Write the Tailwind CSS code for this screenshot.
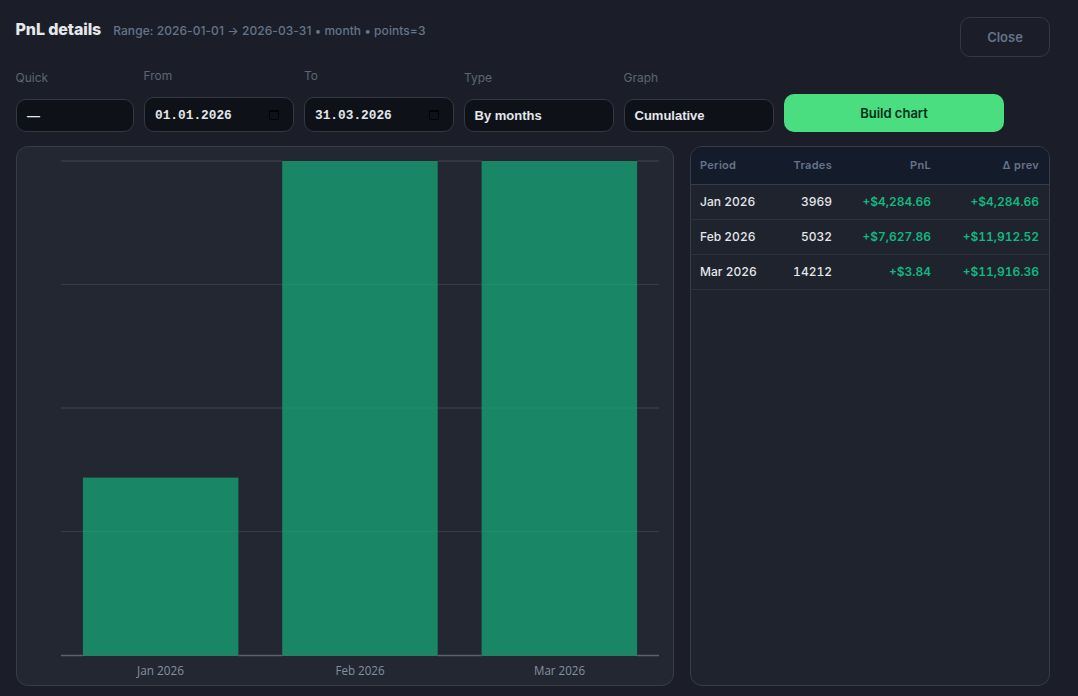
<!DOCTYPE html>
<html lang="en">
  <head>
    <meta charset="UTF-8" />
    <meta name="viewport" content="width=device-width, initial-scale=1.0" />
    <title>PnL details</title>
    <script src="https://cdn.jsdelivr.net/npm/@tailwindcss/browser@4"></script>
  </head>

  <body class="h-screen overflow-hidden bg-[#1b1e28] font-['Inter',sans-serif] text-[#e5e7eb]">
    <div class="flex h-full flex-col pt-[17px] pr-7 pb-2.5 pl-4">
      <header class="flex h-10 items-start justify-between">
        <div class="-ml-[0.5px] flex items-baseline gap-3">
          <h1 class="text-base leading-6 font-extrabold tracking-[-0.1px]">PnL details</h1>
          <span class="text-xs font-medium tracking-[0.06px] text-[#64748b]">Range: 2026-01-01 → 2026-03-31 • month • points=3</span>
        </div>
        <button class="h-10 w-[90px] rounded-[10px] border border-[#343843] pt-0.5 text-[13px] font-semibold text-[#64748b]">Close</button>
      </header>

      <div class="mt-[9px] flex h-[66px] items-end gap-2.5">
        <label class="w-[118px]">
          <span class="-ml-[0.5px] block text-xs leading-[15px] text-[#5c6675]">Quick</span>
          <span class="mt-3.5 flex h-[33px] items-center rounded-[10px] border border-[#343843] bg-[#0e1118] px-2.5 font-['Liberation_Sans',sans-serif] text-[13px] font-bold">—</span>
        </label>
        <label class="w-[150px]">
          <span class="-ml-[0.5px] block text-xs leading-[15px] text-[#5c6675]">From</span>
          <span class="mt-3.5 flex h-[35px] items-center justify-between rounded-[10px] border border-[#343843] bg-[#0e1118] pr-3 pl-2.5 font-['Liberation_Mono',monospace] text-[12.8px] font-bold">
            <span class="pt-0.5">01.01.2026</span>
            <svg class="h-3.5 w-3.5" viewBox="0 0 14 14" fill="none" stroke="#030406"><rect x="2.5" y="2.5" width="9" height="9" rx="1" /><path d="M2 3h10" stroke-width="2" /></svg>
          </span>
        </label>
        <label class="w-[150px]">
          <span class="block text-xs leading-[15px] text-[#5c6675]">To</span>
          <span class="mt-3.5 flex h-[35px] items-center justify-between rounded-[10px] border border-[#343843] bg-[#0e1118] pr-3 pl-2.5 font-['Liberation_Mono',monospace] text-[12.8px] font-bold">
            <span class="pt-0.5">31.03.2026</span>
            <svg class="h-3.5 w-3.5" viewBox="0 0 14 14" fill="none" stroke="#030406"><rect x="2.5" y="2.5" width="9" height="9" rx="1" /><path d="M2 3h10" stroke-width="2" /></svg>
          </span>
        </label>
        <label class="w-[150px]">
          <span class="block text-xs leading-[15px] text-[#5c6675]">Type</span>
          <span class="mt-3.5 flex h-[33px] items-center rounded-[10px] border border-[#343843] bg-[#0e1118] px-[9.5px] font-['Liberation_Sans',sans-serif] text-[13px] font-bold">By months</span>
        </label>
        <label class="w-[150px]">
          <span class="-ml-[0.5px] block text-xs leading-[15px] text-[#5c6675]">Graph</span>
          <span class="mt-3.5 flex h-[33px] items-center rounded-[10px] border border-[#343843] bg-[#0e1118] px-[9.5px] font-['Liberation_Sans',sans-serif] text-[13px] font-bold">Cumulative</span>
        </label>
        <button class="h-[38px] w-[220px] rounded-[10px] bg-[#4ade80] pt-0.5 text-[13px] font-semibold text-[#052e16]">Build chart</button>
      </div>

      <main class="mt-3.5 flex min-h-0 flex-1 gap-4">
        <section class="w-[658px] overflow-hidden rounded-xl border border-[#383c47] bg-[#232731]">
          <svg class="block" width="656" height="538" viewBox="0 0 656 538">
            <!-- bars -->
            <g fill="#198766">
              <rect x="65.9" y="330.6" width="155.5" height="177.9" />
              <rect x="265.2" y="14" width="155.5" height="494.5" />
              <rect x="464.6" y="14" width="155.5" height="494.5" />
            </g>
            <!-- grid -->
            <g stroke="#94a3b8" stroke-opacity=".18">
              <path d="M44 14H265.2" stroke-width="1.4" />
              <path d="M420.7 14h43.9M620.1 14H642" stroke-width="1.4" />
              <path d="M44 137.5H265.2M420.7 137.5h43.9M620.1 137.5H642" />
              <path d="M44 261H265.2M420.7 261h43.9M620.1 261H642" stroke-width="1.4" />
              <path d="M44 384.5h21.9M221.4 384.5h43.8M420.7 384.5h43.9M620.1 384.5H642" />
            </g>
            <g stroke="#94a3b8" stroke-opacity=".1">
              <path d="M265.2 137.5h155.5M464.6 137.5h155.5M265.2 261h155.5M464.6 261h155.5" />
              <path d="M65.9 384.5h155.5M265.2 384.5h155.5M464.6 384.5h155.5" />
            </g>
            <path d="M44 508.5h21.9M221.4 508.5h43.8M420.7 508.5h43.9M620.1 508.5H642" stroke="#5b606c" stroke-width="1.4" />
            <path d="M65.9 508.5h155.5M265.2 508.5h155.5M464.6 508.5h155.5" stroke="#2f7b68" />
            <!-- x axis -->
            <g class="font-['Open_Sans',sans-serif] text-xs" fill="#8490a3" text-anchor="middle">
              <text x="143.5" y="528" textLength="47" lengthAdjust="spacingAndGlyphs">Jan 2026</text>
              <text x="343" y="528" textLength="49" lengthAdjust="spacingAndGlyphs">Feb 2026</text>
              <text x="542.5" y="528" textLength="51" lengthAdjust="spacingAndGlyphs">Mar 2026</text>
            </g>
          </svg>
        </section>

        <section class="w-[360px] overflow-hidden rounded-xl border border-[#383c47] bg-[#1f232d]">
          <table class="w-full table-fixed text-right text-xs tabular-nums">
            <thead>
              <tr class="h-[37px] border-b border-[#383c47] bg-[#141b2b] text-[11px] tracking-[0.3px] text-[#64748b]">
                <th class="w-[71px] pl-[9px] text-left font-semibold">Period</th>
                <th class="w-[80px] pr-2.5 font-semibold">Trades</th>
                <th class="w-[99px] pr-2.5 font-semibold">PnL</th>
                <th class="pr-2.5 font-semibold">Δ prev</th>
              </tr>
            </thead>
            <tbody class="font-medium">
              <tr class="h-[35px] border-b border-[#2d313b]">
                <td class="pt-px pl-[9px] text-left whitespace-nowrap">Jan 2026</td>
                <td class="pt-px pr-2.5">3969</td>
                <td class="pt-px pr-2.5 font-semibold text-[#10b981]">+$4,284.66</td>
                <td class="pt-px pr-2.5 font-semibold text-[#10b981]">+$4,284.66</td>
              </tr>
              <tr class="h-[35px] border-b border-[#2d313b]">
                <td class="pt-px pl-[9px] text-left whitespace-nowrap">Feb 2026</td>
                <td class="pt-px pr-2.5">5032</td>
                <td class="pt-px pr-2.5 font-semibold text-[#10b981]">+$7,627.86</td>
                <td class="pt-px pr-2.5 font-semibold text-[#10b981]">+$11,912.52</td>
              </tr>
              <tr class="h-[35px] border-b border-[#2d313b]">
                <td class="pt-px pl-[9px] text-left whitespace-nowrap">Mar 2026</td>
                <td class="pt-px pr-2.5">14212</td>
                <td class="pt-px pr-2.5 font-semibold text-[#10b981]">+$3.84</td>
                <td class="pt-px pr-2.5 font-semibold text-[#10b981]">+$11,916.36</td>
              </tr>
            </tbody>
          </table>
        </section>
      </main>
    </div>
  </body>
</html>
